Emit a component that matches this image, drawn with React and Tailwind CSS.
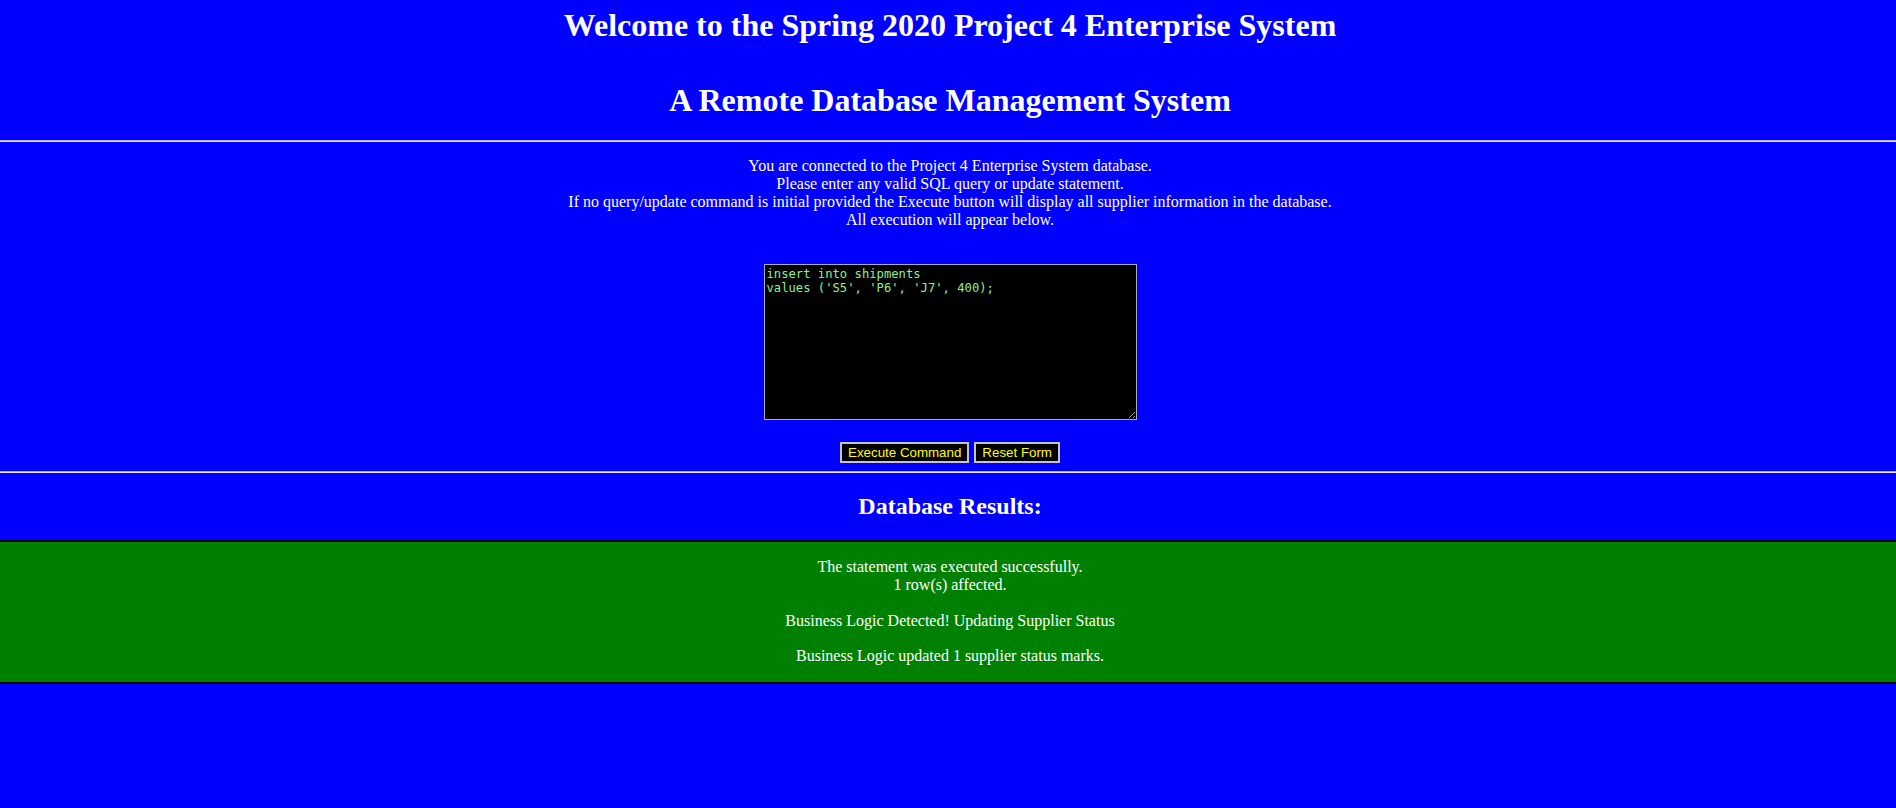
export default function App() {
    return (
        <div className="min-h-[808px] bg-[#0000ff] text-white text-center font-['Liberation_Serif',serif] pt-[7px] pl-[4px]">
            <h1 className="text-[32px] font-bold leading-[37px]">
                Welcome to the Spring 2020 Project 4 Enterprise System
            </h1>
            <h1 className="mt-[38px] text-[32px] font-bold leading-[37px]">
                A Remote Database Management System
            </h1>

            <div className="mt-[21px] -ml-[4px] border-t border-b border-t-[#b4b4d4] border-b-[#e4e4f4]" />

            {/* instructions */}
            <p className="mt-[15px] text-[16px] leading-[18px]">
                You are connected to the Project 4 Enterprise System database.
                <br />
                Please enter any valid SQL query or update statement.
                <br />
                If no query/update command is initial provided the Execute button will display all supplier information in the database.
                <br />
                All execution will appear below.
            </p>

            <form className="mt-[35px]" onSubmit={(e) => e.preventDefault()}>
                <textarea
                    className="block mx-auto w-[373px] h-[156px] bg-black text-[#90ee90] border border-[#a8a8c0] px-[2px] py-[2px] text-[12.2px] leading-[14px] font-['DejaVu_Sans_Mono',monospace] text-left outline-none"
                    defaultValue={"insert into shipments\nvalues ('S5', 'P6', 'J7', 400);"}
                />
                <div className="mt-[22px] flex justify-center gap-[5px] font-['Liberation_Sans',Arial,sans-serif] text-[13.33px] leading-[15px]">
                    <button
                        type="submit"
                        className="bg-black text-[#ffff00] border-2 border-[#c4c4d4] px-[6px] py-[1px]"
                    >
                        Execute Command
                    </button>
                    <button
                        type="reset"
                        className="bg-black text-[#ffff00] border-2 border-[#c4c4d4] px-[6px] py-[1px]"
                    >
                        Reset Form
                    </button>
                </div>
            </form>

            <div className="mt-[8px] -ml-[4px] border-t border-b border-t-[#b4b4d4] border-b-[#e4e4f4]" />

            <h2 className="mt-[19px] text-[24px] font-bold leading-[28px]">Database Results:</h2>

            {/* result box */}
            <div className="mt-[20px] -ml-[4px] pl-[4px] bg-[#008000] border-y-2 border-black pt-[16px] pb-[17px] text-[16px] leading-[18px]">
                <p>
                    The statement was executed successfully.
                    <br />
                    1 row(s) affected.
                </p>
                <p className="mt-[18px]">Business Logic Detected! Updating Supplier Status</p>
                <p className="mt-[17px]">Business Logic updated 1 supplier status marks.</p>
            </div>
        </div>
    );
}
